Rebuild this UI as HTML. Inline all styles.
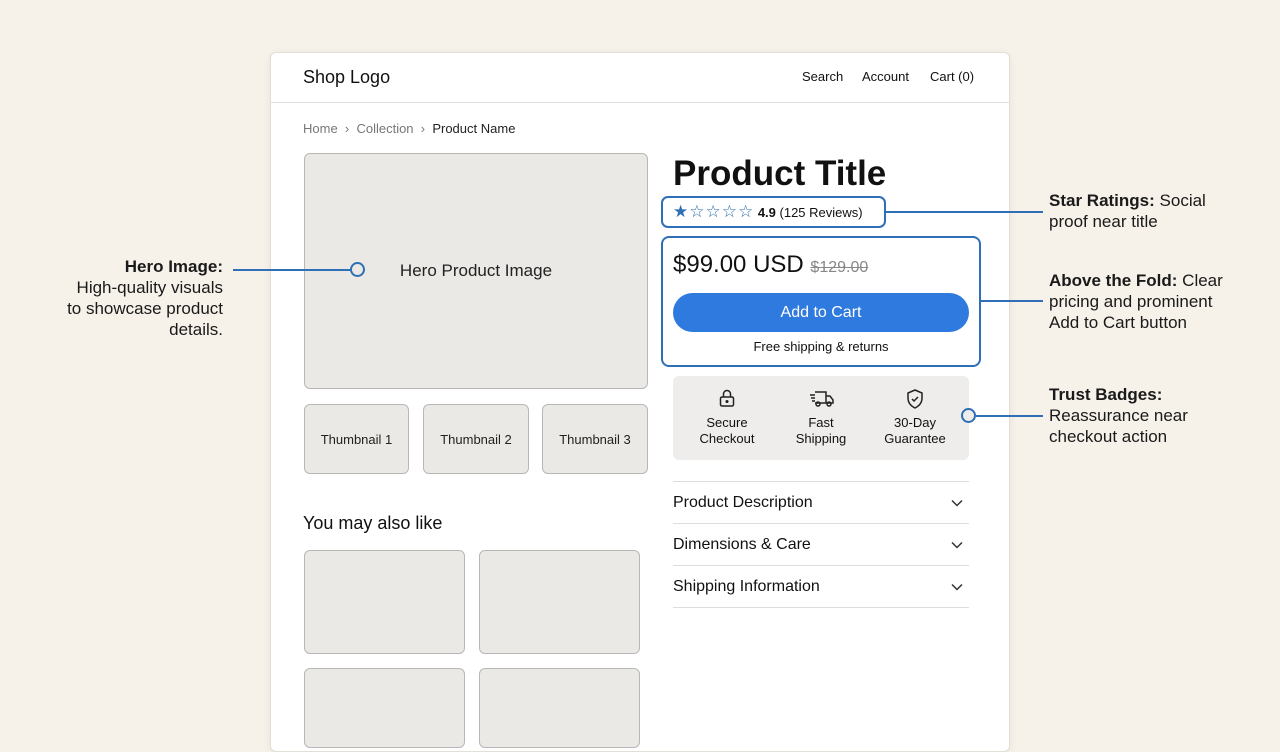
<!DOCTYPE html>
<html><head><meta charset="utf-8"><style>
*{margin:0;padding:0;box-sizing:border-box}
body{width:1280px;height:720px;background:#f6f1e9;font-family:"Liberation Sans",sans-serif;color:#111;position:relative;overflow:hidden}
.a{position:absolute}
.card{left:270px;top:52px;width:740px;height:700px;background:#fff;border:1px solid #e2ded8;border-radius:6px;box-shadow:0 2px 8px rgba(0,0,0,.06)}
.box{background:#ebe9e6;border:1px solid #b9b7b4;border-radius:6px}
.th{display:flex;align-items:center;justify-content:center;font-size:13px;color:#222}
.line{background:#2f6fb5;height:1.5px}
.dot{width:15px;height:15px;border:2px solid #2f6fb5;border-radius:50%;background:#f6f1e9}
.ann{font-size:17px;line-height:21px;color:#1a1a1a}
.acc{left:673px;width:296px;height:42px;border-bottom:1px solid #ddd;font-size:16px;display:flex;align-items:center;justify-content:space-between;padding-right:6px}
</style></head><body>
<div class="a card"></div>
<div class="a" style="left:303px;top:67px;font-size:18px">Shop Logo</div>
<div class="a" style="left:802px;top:69px;font-size:13px">Search</div>
<div class="a" style="left:862px;top:69px;font-size:13px">Account</div>
<div class="a" style="left:930px;top:69px;font-size:13px">Cart (0)</div>
<div class="a" style="left:271px;top:102px;width:738px;height:1px;background:#e3e1de"></div>
<div class="a" style="left:303px;top:121px;font-size:13px;color:#777">Home &nbsp;›&nbsp; Collection &nbsp;›&nbsp; <span style="color:#222">Product Name</span></div>
<div class="a box th" style="left:304px;top:153px;width:344px;height:236px;font-size:17px">Hero Product Image</div>
<div class="a box th" style="left:304px;top:404px;width:105px;height:70px">Thumbnail 1</div>
<div class="a box th" style="left:423px;top:404px;width:106px;height:70px">Thumbnail 2</div>
<div class="a box th" style="left:542px;top:404px;width:106px;height:70px">Thumbnail 3</div>
<div class="a" style="left:303px;top:513px;font-size:18px">You may also like</div>
<div class="a box" style="left:304px;top:550px;width:161px;height:104px"></div>
<div class="a box" style="left:479px;top:550px;width:161px;height:104px"></div>
<div class="a box" style="left:304px;top:668px;width:161px;height:80px"></div>
<div class="a box" style="left:479px;top:668px;width:161px;height:80px"></div>

<div class="a" style="left:673px;top:154px;font-size:35px;font-weight:bold">Product Title</div>
<div class="a" style="left:661px;top:196px;width:225px;height:32px;border:2px solid #2f6fb5;border-radius:7px;display:flex;align-items:center;padding-left:10px;font-size:13px">
<span style="color:#2f6fb5;font-size:17px;letter-spacing:1px">★☆☆☆☆</span>&nbsp;<b>4.9</b>&nbsp;(125 Reviews)</div>
<div class="a" style="left:661px;top:236px;width:320px;height:131px;border:2px solid #2f6fb5;border-radius:8px"></div>
<div class="a" style="left:673px;top:251px;font-size:24px">$99.00 USD <span style="font-size:16px;color:#888;text-decoration:line-through">$129.00</span></div>
<div class="a" style="left:673px;top:293px;width:296px;height:39px;border-radius:20px;background:#2f7ade;color:#fff;font-size:16px;display:flex;align-items:center;justify-content:center">Add to Cart</div>
<div class="a" style="left:673px;top:339px;width:296px;text-align:center;font-size:13px">Free shipping &amp; returns</div>
<div class="a" style="left:673px;top:376px;width:296px;height:84px;background:#efedeb;border-radius:6px"></div>
<svg class="a" style="left:717px;top:388px" width="20" height="20" viewBox="0 0 20 20" fill="none" stroke="#222" stroke-width="1.5"><rect x="3.5" y="9" width="13" height="9" rx="1.5"/><path d="M6.5 9V6a3.5 3.5 0 0 1 7 0v3"/><circle cx="10" cy="13.5" r=".8" fill="#222"/></svg>
<svg class="a" style="left:809px;top:389px" width="26" height="20" viewBox="0 0 26 20" fill="none" stroke="#222" stroke-width="1.5"><path d="M6 3h11v11H6M17 7h4l3 4v3h-7"/><path d="M1 6h5M2 9h4M3 12h3"/><circle cx="9" cy="15" r="2"/><circle cx="20" cy="15" r="2"/></svg>
<svg class="a" style="left:905px;top:388px" width="20" height="22" viewBox="0 0 20 22" fill="none" stroke="#222" stroke-width="1.5"><path d="M10 2l7 3v5c0 5-3 8-7 10C6 18 3 15 3 10V5z"/><path d="M7 11l2 2 4-4"/></svg>
<div class="a" style="left:687px;top:415px;width:80px;text-align:center;font-size:13px;line-height:16px">Secure<br>Checkout</div>
<div class="a" style="left:781px;top:415px;width:80px;text-align:center;font-size:13px;line-height:16px">Fast<br>Shipping</div>
<div class="a" style="left:875px;top:415px;width:80px;text-align:center;font-size:13px;line-height:16px">30-Day<br>Guarantee</div>
<div class="a" style="left:673px;top:481px;width:296px;height:1px;background:#ddd"></div>
<div class="a acc" style="top:482px"><span>Product Description</span><svg width="12" height="8" viewBox="0 0 12 8" fill="none" stroke="#333" stroke-width="1.5"><path d="M1 1.5l5 5 5-5"/></svg></div>
<div class="a acc" style="top:524px"><span>Dimensions &amp; Care</span><svg width="12" height="8" viewBox="0 0 12 8" fill="none" stroke="#333" stroke-width="1.5"><path d="M1 1.5l5 5 5-5"/></svg></div>
<div class="a acc" style="top:566px"><span>Shipping Information</span><svg width="12" height="8" viewBox="0 0 12 8" fill="none" stroke="#333" stroke-width="1.5"><path d="M1 1.5l5 5 5-5"/></svg></div>

<div class="a ann" style="left:20px;top:256px;width:203px;text-align:right"><b>Hero Image:</b><br>High-quality visuals<br>to showcase product<br>details.</div>
<div class="a line" style="left:233px;top:269px;width:118px"></div>
<div class="a dot" style="left:350px;top:262px;background:#ebe9e6"></div>
<div class="a line" style="left:886px;top:211px;width:157px"></div>
<div class="a ann" style="left:1049px;top:190px"><b>Star Ratings:</b> Social<br>proof near title</div>
<div class="a line" style="left:981px;top:300px;width:62px"></div>
<div class="a ann" style="left:1049px;top:270px"><b>Above the Fold:</b> Clear<br>pricing and prominent<br>Add to Cart button</div>
<div class="a dot" style="left:961px;top:408px;background:#efedeb"></div>
<div class="a line" style="left:976px;top:415px;width:67px"></div>
<div class="a ann" style="left:1049px;top:384px"><b>Trust Badges:</b><br>Reassurance near<br>checkout action</div>
</body></html>
